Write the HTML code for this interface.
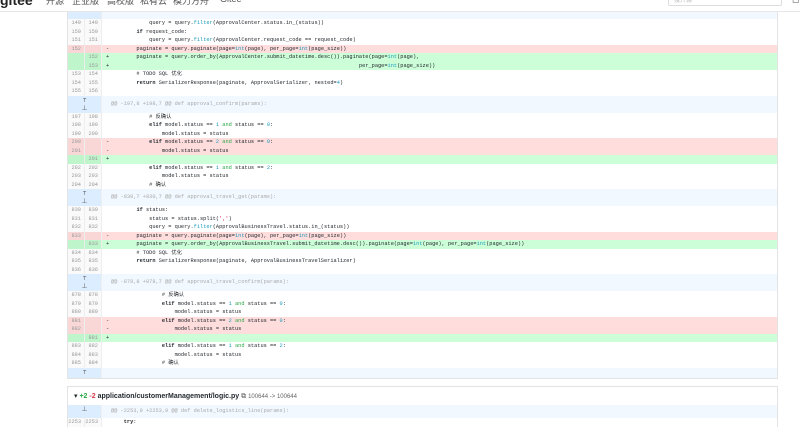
<!DOCTYPE html>
<html><head><meta charset="utf-8"><style>
*{margin:0;padding:0;box-sizing:border-box}
body{width:800px;height:427px;overflow:hidden;background:#fff;font-family:"Liberation Sans","Noto Sans CJK SC",sans-serif;position:relative}
.top{position:absolute;left:0;top:0;width:800px;height:12px;background:#fff;border-bottom:1px solid #e6e6e6;z-index:2;font-size:9px;color:#555}
.top span{position:absolute;top:-6px}
.logo{font-weight:bold;font-size:14px;left:0;top:-8px!important;color:#222}
.search{position:absolute;left:668px;top:-2px;width:114px;height:8px;border:1px solid #ddd;border-radius:2px;font-size:6px;color:#bbb;padding-left:5px;line-height:5px}
.box{position:absolute;left:67px;top:0;width:711px;border-right:1px solid #e3e3e3;border-left:1px solid #e3e3e3}
.r{display:flex;height:8.5px;font-family:"Liberation Mono","Noto Sans CJK SC",monospace;font-size:5.3px;line-height:8.5px;color:#24292e;white-space:pre}
.n{width:17px;text-align:right;padding-right:3px;color:#999;background:#fafafa;border-right:1px solid #eee;flex:none}
.s{width:9px;padding-left:4px;flex:none}
.c{flex:1}
.d{background:#ffdddd}.d .n{background:#f9d7d7}
.a{background:#ccffd8}.a .n{background:#bef5cb}
.h{height:17px;background:#f1f8ff;line-height:17px;color:#aaa}
.h .n{width:34px;background:#dbedff;text-align:center;padding:0;font-size:6px;color:#555;line-height:8px;padding-top:1px}
.h .c{padding-left:9px}
b{font-weight:bold}
.k{color:#1a9bbb}.g{color:#28a745}.q{color:#d14}
.fh{position:absolute;left:67px;top:386px;width:711px;height:19px;border:1px solid #e3e3e3;border-bottom:none;font-size:7px;line-height:19px;padding-left:6px;color:#24292e}
</style></head><body>
<div class="top"><span class="logo">gitee</span><span style="left:46px">开源</span><span style="left:72px">企业版</span><span style="left:107px">高校版</span><span style="left:140px">私有云</span><span style="left:173px">模力方舟</span><span style="left:220px">Gitee</span><div class="search">搜开源</div><span style="left:792px">◻</span></div>
<div class="box">
<div class="r h" style="height:19px"><div class="n"></div><div class="c"></div></div>
<div class="r"><div class="n">149</div><div class="n">149</div><div class="s"></div><div class="c">            query = query.<span class="k">filter</span>(ApprovalCenter.status.in_(status))</div></div>
<div class="r"><div class="n">150</div><div class="n">150</div><div class="s"></div><div class="c">        <b>if</b> request_code:</div></div>
<div class="r"><div class="n">151</div><div class="n">151</div><div class="s"></div><div class="c">            query = query.<span class="k">filter</span>(ApprovalCenter.request_code == request_code)</div></div>
<div class="r d"><div class="n">152</div><div class="n"></div><div class="s">-</div><div class="c">        paginate = query.paginate(page=<span class="k">int</span>(page), per_page=<span class="k">int</span>(page_size))</div></div>
<div class="r a"><div class="n"></div><div class="n">152</div><div class="s">+</div><div class="c">        paginate = query.order_by(ApprovalCenter.submit_datetime.desc()).paginate(page=<span class="k">int</span>(page),</div></div>
<div class="r a"><div class="n"></div><div class="n">153</div><div class="s">+</div><div class="c">                                                                              per_page=<span class="k">int</span>(page_size))</div></div>
<div class="r"><div class="n">153</div><div class="n">154</div><div class="s"></div><div class="c">        # TODO SQL 优化</div></div>
<div class="r"><div class="n">154</div><div class="n">155</div><div class="s"></div><div class="c">        <b>return</b> SerializerResponse(paginate, ApprovalSerializer, nested=<span class="k">4</span>)</div></div>
<div class="r"><div class="n">155</div><div class="n">156</div><div class="s"></div><div class="c"></div></div>
<div class="r h"><div class="n">⊤<br>⊥</div><div class="c">@@ -197,8 +198,7 @@ def approval_confirm(params):</div></div>
<div class="r"><div class="n">197</div><div class="n">198</div><div class="s"></div><div class="c">            # 反确认</div></div>
<div class="r"><div class="n">198</div><div class="n">199</div><div class="s"></div><div class="c">            <b>elif</b> model.status == <span class="k">1</span> <span class="g">and</span> status == <span class="k">0</span>:</div></div>
<div class="r"><div class="n">199</div><div class="n">200</div><div class="s"></div><div class="c">                model.status = status</div></div>
<div class="r d"><div class="n">200</div><div class="n"></div><div class="s">-</div><div class="c">            <b>elif</b> model.status == <span class="k">2</span> <span class="g">and</span> status == <span class="k">0</span>:</div></div>
<div class="r d"><div class="n">201</div><div class="n"></div><div class="s">-</div><div class="c">                model.status = status</div></div>
<div class="r a"><div class="n"></div><div class="n">201</div><div class="s">+</div><div class="c"></div></div>
<div class="r"><div class="n">202</div><div class="n">202</div><div class="s"></div><div class="c">            <b>elif</b> model.status == <span class="k">1</span> <span class="g">and</span> status == <span class="k">2</span>:</div></div>
<div class="r"><div class="n">203</div><div class="n">203</div><div class="s"></div><div class="c">                model.status = status</div></div>
<div class="r"><div class="n">204</div><div class="n">204</div><div class="s"></div><div class="c">            # 确认</div></div>
<div class="r h"><div class="n">⊤<br>⊥</div><div class="c">@@ -830,7 +830,7 @@ def approval_travel_get(params):</div></div>
<div class="r"><div class="n">830</div><div class="n">830</div><div class="s"></div><div class="c">        <b>if</b> status:</div></div>
<div class="r"><div class="n">831</div><div class="n">831</div><div class="s"></div><div class="c">            status = status.split(<span class="q">','</span>)</div></div>
<div class="r"><div class="n">832</div><div class="n">832</div><div class="s"></div><div class="c">            query = query.<span class="k">filter</span>(ApprovalBusinessTravel.status.in_(status))</div></div>
<div class="r d"><div class="n">833</div><div class="n"></div><div class="s">-</div><div class="c">        paginate = query.paginate(page=<span class="k">int</span>(page), per_page=<span class="k">int</span>(page_size))</div></div>
<div class="r a"><div class="n"></div><div class="n">833</div><div class="s">+</div><div class="c">        paginate = query.order_by(ApprovalBusinessTravel.submit_datetime.desc()).paginate(page=<span class="k">int</span>(page), per_page=<span class="k">int</span>(page_size))</div></div>
<div class="r"><div class="n">834</div><div class="n">834</div><div class="s"></div><div class="c">        # TODO SQL 优化</div></div>
<div class="r"><div class="n">835</div><div class="n">835</div><div class="s"></div><div class="c">        <b>return</b> SerializerResponse(paginate, ApprovalBusinessTravelSerializer)</div></div>
<div class="r"><div class="n">836</div><div class="n">836</div><div class="s"></div><div class="c"></div></div>
<div class="r h"><div class="n">⊤<br>⊥</div><div class="c">@@ -878,8 +878,7 @@ def approval_travel_confirm(params):</div></div>
<div class="r"><div class="n">878</div><div class="n">878</div><div class="s"></div><div class="c">                # 反确认</div></div>
<div class="r"><div class="n">879</div><div class="n">879</div><div class="s"></div><div class="c">                <b>elif</b> model.status == <span class="k">1</span> <span class="g">and</span> status == <span class="k">0</span>:</div></div>
<div class="r"><div class="n">880</div><div class="n">880</div><div class="s"></div><div class="c">                    model.status = status</div></div>
<div class="r d"><div class="n">881</div><div class="n"></div><div class="s">-</div><div class="c">                <b>elif</b> model.status == <span class="k">2</span> <span class="g">and</span> status == <span class="k">0</span>:</div></div>
<div class="r d"><div class="n">882</div><div class="n"></div><div class="s">-</div><div class="c">                    model.status = status</div></div>
<div class="r a"><div class="n"></div><div class="n">881</div><div class="s">+</div><div class="c"></div></div>
<div class="r"><div class="n">883</div><div class="n">882</div><div class="s"></div><div class="c">                <b>elif</b> model.status == <span class="k">1</span> <span class="g">and</span> status == <span class="k">2</span>:</div></div>
<div class="r"><div class="n">884</div><div class="n">883</div><div class="s"></div><div class="c">                    model.status = status</div></div>
<div class="r"><div class="n">885</div><div class="n">884</div><div class="s"></div><div class="c">                # 确认</div></div>
<div class="r h" style="height:11px;line-height:11px;border-bottom:1px solid #e3e3e3"><div class="n">⊤</div><div class="c"></div></div>
</div>
<div class="fh">▾ <b style="color:#28a745">+2</b> <b style="color:#d73a49">-2</b> <b>application/customerManagement/logic.py</b> <span style="color:#555">⧉</span> <span style="font-size:6px;color:#666">100644 -&gt; 100644</span></div>
<div class="box" style="top:405px">
<div class="r h" style="height:13px;line-height:13px"><div class="n">⊥</div><div class="c">@@ -2253,9 +2253,9 @@ def delete_logistics_line(params):</div></div>
<div class="r"><div class="n">2253</div><div class="n">2253</div><div class="s"></div><div class="c">    <b>try</b>:</div></div>
</div>
</body></html>
